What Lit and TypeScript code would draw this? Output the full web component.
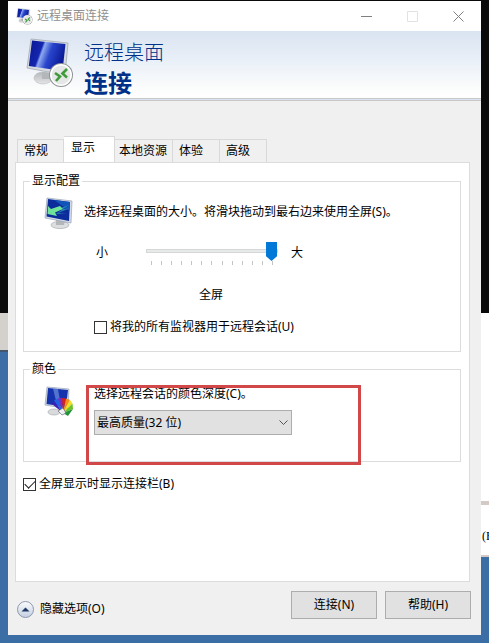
import { LitElement, html, css } from "lit";
import { customElement, state } from "lit/decorators.js";

const remoteIcon = (badge: number) => html`
  <svg viewBox="0 0 48 50" width="100%" height="100%" aria-hidden="true">
    <defs>
      <linearGradient id="glass" x1="0" y1="0" x2="1" y2="0.3">
        <stop offset="0" stop-color="#0a1790" />
        <stop offset="0.38" stop-color="#1426b0" />
        <stop offset="0.44" stop-color="#8ea9f0" />
        <stop offset="0.64" stop-color="#2a46cc" />
        <stop offset="1" stop-color="#0c1c9a" />
      </linearGradient>
      <linearGradient id="stand" x1="0" y1="0" x2="0" y2="1">
        <stop offset="0" stop-color="#b4b7ba" />
        <stop offset="1" stop-color="#e4e5e6" />
      </linearGradient>
    </defs>
    <ellipse cx="17" cy="40" rx="9" ry="6" fill="url(#stand)" stroke="#b8babc" stroke-width="0.6" />
    <path d="M16 34 L26 35 L26 41 L16 41Z" fill="#b4b7ba" />
    <path d="M5 1 L42 5 L39 37 L1 30Z" fill="#d5dae0" stroke="#a5abb3" stroke-width="0.8" />
    <path d="M6 2.5 L39.5 6 L36.5 33 L2.8 28Z" fill="url(#glass)" />
    <g transform="translate(35 37) scale(${badge})">
      <circle r="12" fill="#8f9394" />
      <circle r="11" fill="#fff" />
      <circle r="9.4" fill="#e4e7e5" />
      <path d="M-6 -2 L-1 1.5 L-5 6" fill="none" stroke="#3f9a3a" stroke-width="2.6" />
      <path d="M6 -6 L1.5 -1.5 L6 2.5" fill="none" stroke="#3f9a3a" stroke-width="2.6" />
    </g>
  </svg>
`;

const arrowScreen = html`
  <svg viewBox="0 0 30 33" width="30" height="33" aria-hidden="true">
    <ellipse cx="16" cy="28" rx="9" ry="3.6" fill="#dcdedf" stroke="#a9acaf" stroke-width="0.7" />
    <path d="M12 22 L21 23 L20 28 L12 28Z" fill="#b4b7ba" />
    <path d="M3 1 L28 4 L27 26 L1 21Z" fill="#d3dae6" stroke="#97a3b8" stroke-width="0.7" />
    <path d="M4 2 L26 5 L25 24 L2.5 19.5Z" fill="#0d2c9c" />
    <path d="M10 3 L26 5 L25.5 14Z" fill="#1254b8" />
    <path d="M25 8 L14 12 L25 11.5 L14 16 L23 16 L12 17Z" fill="#2284b4" />
    <path d="M4 9 L7 12 L16 9 L19 12 L11 15.5 L13 19 L3.5 17Z" fill="#6fe39a" />
  </svg>
`;

const swatchScreen = html`
  <svg viewBox="0 0 30 31" width="30" height="31" aria-hidden="true">
    <ellipse cx="10" cy="26" rx="6" ry="3" fill="#d8dadc" stroke="#aaadb0" stroke-width="0.7" />
    <path d="M3 1 L25 3 L24 23 L1 19Z" fill="#d3dae6" stroke="#97a3b8" stroke-width="0.7" />
    <path d="M4 2 L24 4 L22 21 L2.5 18Z" fill="#1533ac" />
    <path d="M9 2.4 L14 3 L17 20 L13 19Z" fill="#7d9fea" opacity="0.6" />
    <path d="M19 27 L8 18 L10 14.5Z" fill="#3b1fb8" />
    <path d="M19 27 L10 14.5 L14 12.5Z" fill="#1e62e0" />
    <path d="M19 27 L14 12.5 L18 12Z" fill="#7a2bc8" />
    <path d="M19 27 L18 12 L22 12.5Z" fill="#d8201f" />
    <path d="M19 27 L22 12.5 L26 14Z" fill="#f5901a" />
    <path d="M19 27 L26 14 L28.5 17.5Z" fill="#f0e020" />
    <path d="M19 27 L28.5 17.5 L29 23Z" fill="#6cc22a" />
    <path d="M19 27 L29 23 L24 30Z" fill="#22943c" />
    <path d="M14 25 L19 22 L22 27 L18 29Z" fill="#eef0f4" stroke="#55585e" stroke-width="0.6" />
  </svg>
`;

@customElement("app-root")
export class AppRoot extends LitElement {
  @state() private tab = "显示";

  private tabs = ["常规", "显示", "本地资源", "体验", "高级"];

  static styles = css`
    :host {
      display: block;
      position: relative;
      min-height: 100vh;
      box-sizing: border-box;
      padding: 1px 8px 8px;
      background: #3a6ea5;
      color: #000;
      font: 12px/16px "Noto Sans", "Noto Sans CJK SC", sans-serif;
    }
    * {
      box-sizing: border-box;
    }
    button,
    select,
    input {
      font: inherit;
      color: inherit;
      margin: 0;
    }
    .desktop {
      position: absolute;
      inset: 0;
      display: grid;
      grid-template-columns: 1fr 8px;
      overflow: hidden;
    }
    .left {
      display: grid;
      grid-template-rows: 313px 39px 1fr;
    }
    .right {
      display: grid;
      grid-template-rows: 313px 188px 4px 50px 2px 1fr;
    }
    .dark {
      background: #0a0a0a;
    }
    .beige {
      background: #d4d0cc;
      border-bottom: 2px solid #44566c;
    }
    .sand {
      background: #d4c9c6;
    }
    .white {
      background: #fff;
    }
    .behind {
      display: flex;
      align-items: center;
      padding: 12px 0 0 1px;
      overflow: hidden;
      white-space: nowrap;
      font-family: "Liberation Serif", serif;
    }
    .window {
      position: relative;
      display: flex;
      flex-direction: column;
      min-height: calc(100vh - 9px);
      background: #f0f0f0;
    }
    .titlebar {
      display: flex;
      align-items: center;
      height: 30px;
      padding-left: 8px;
      background: #fff;
      color: #8f8f8f;
    }
    .small-icon {
      width: 16px;
      height: 16px;
      margin-right: 5px;
    }
    .small-icon svg {
      display: block;
      overflow: visible;
    }
    .caption {
      flex: 1;
    }
    .winbtn {
      display: grid;
      place-items: center;
      width: 46px;
      height: 30px;
      padding: 0;
      border: 0;
      background: none;
      color: #808080;
    }
    .winbtn.off {
      color: #e2e2e2;
    }
    .banner {
      display: flex;
      gap: 10px;
      height: 70px;
      padding: 7px 18px 0;
      background: linear-gradient(#dae3f1, #eaf0f8 45%, #fbfcfc 85%, #fff);
      border-bottom: 3px double #c8c8c8;
      color: #12337a;
    }
    .big-icon {
      width: 48px;
      height: 50px;
    }
    .banner h1 {
      margin: 0;
      font-size: 24px;
      line-height: 30px;
      font-weight: 700;
      color: #003087;
    }
    .banner .light {
      display: block;
      font-size: 20px;
      line-height: 30px;
      font-weight: 300;
    }
    .tabs {
      display: flex;
      align-items: flex-end;
      margin: 35px 9px 0;
      height: 26px;
    }
    .tab {
      height: 23px;
      padding: 0 6px;
      border: 1px solid #d9d9d9;
      border-left-width: 0;
      border-bottom: 0;
      background: #f0f0f0;
      text-align: left;
      white-space: nowrap;
    }
    .tab:first-child {
      border-left-width: 1px;
    }
    .tab.on {
      height: 26px;
      padding: 0 7px 3px;
      background: #fff;
    }
    .wide {
      width: 47px;
    }
    .tab.wide.on {
      width: 51px;
    }
    .fit {
      width: 58px;
      padding: 0 4px;
    }
    .page {
      flex: 1;
      margin: 0 11px 0 7px;
      padding: 10px 8px 10px 7px;
      background: #fff;
      border: 1px solid #dcdcdc;
    }
    fieldset {
      position: relative;
      min-width: 0;
      margin: 0 0 9px;
      padding: 0 9px 0 20px;
      border: 1px solid #dcdcdc;
    }
    legend {
      margin-left: -14px;
      padding: 0 2px;
    }
    .display {
      height: 179px;
    }
    .colors {
      height: 101px;
      margin-bottom: 14px;
    }
    .row {
      display: flex;
      gap: 10px;
    }
    .row > svg {
      flex: none;
    }
    .display .row {
      padding-top: 8px;
    }
    .display .row p {
      margin: 7px 0 0;
    }
    .colors .row {
      padding-top: 9px;
    }
    .scale {
      display: flex;
      margin: 11px 0 0 52px;
    }
    .scale > span {
      padding-top: 4px;
    }
    .slider {
      display: flex;
      flex-direction: column;
      width: 132px;
      margin: 0 13px 0 38px;
    }
    .slider input {
      appearance: none;
      width: 132px;
      height: 20px;
      background: none;
    }
    .slider input::-webkit-slider-runnable-track {
      height: 4px;
      background: #e7eaea;
      border: 1px solid #d6d6d6;
    }
    .slider input::-webkit-slider-thumb {
      appearance: none;
      width: 11px;
      height: 19px;
      margin-top: -8px;
      background: #0078d7;
      clip-path: polygon(0 0, 100% 0, 100% 75%, 50% 100%, 0 75%);
    }
    .ticks {
      display: flex;
      justify-content: space-between;
      width: 122px;
      margin-left: 5px;
    }
    .ticks i {
      width: 1px;
      height: 4px;
      background: #c4c4c4;
    }
    .full {
      display: block;
      margin: 22px 0 16px 155px;
    }
    .check {
      display: flex;
      align-items: center;
      gap: 3px;
    }
    .check input {
      appearance: none;
      display: grid;
      width: 13px;
      height: 13px;
      border: 1px solid #333;
      background: #fff;
    }
    .check input:checked::before {
      content: "";
      width: 9px;
      height: 5px;
      margin: 1px;
      border: solid #222;
      border-width: 0 0 1px 1px;
      transform: rotate(-45deg);
    }
    .indent {
      margin-left: 50px;
    }
    .depth {
      display: flex;
      flex-direction: column;
      gap: 8px;
      width: 198px;
      margin-left: 10px;
    }
    .pick {
      position: relative;
    }
    .pick select {
      appearance: none;
      display: block;
      width: 100%;
      height: 25px;
      padding: 0 2px;
      border: 1px solid #adadad;
      border-radius: 0;
      background: #e1e1e1;
    }
    .pick svg {
      position: absolute;
      right: 4px;
      top: 8px;
      pointer-events: none;
    }
    .mark {
      position: absolute;
      left: 62px;
      top: 8px;
      width: 275px;
      height: 80px;
      border: 3px solid #d24848;
      pointer-events: none;
    }
    .footer {
      display: flex;
      align-items: center;
      gap: 8px;
      padding: 9px 10px 16px 8px;
    }
    .toggle {
      display: flex;
      align-items: center;
      gap: 5px;
      margin: 8px auto 0 0;
      padding: 0;
      border: 0;
      background: none;
    }
    .push {
      width: 86px;
      height: 28px;
      padding: 0;
      border: 1px solid #adadad;
      background: #e1e1e1;
    }
  `;

  render() {
    return html`
      <div class="desktop" aria-hidden="true">
        <div class="left">
          <div class="dark"></div>
          <div class="beige"></div>
        </div>
        <div class="right">
          <div class="dark"></div>
          <div class="white"></div>
          <div class="sand"></div>
          <div class="white behind">(E</div>
          <div class="sand"></div>
        </div>
      </div>
      <main class="window">
        <header class="titlebar">
          <span class="small-icon">${remoteIcon(1.3)}</span>
          <span class="caption">远程桌面连接</span>
          <button class="winbtn" aria-label="最小化">
            <svg width="11" height="11"><path d="M0 5.5H11" stroke="currentColor" /></svg>
          </button>
          <button class="winbtn off" aria-label="最大化" disabled>
            <svg width="11" height="11">
              <path d="M.5 .5H10.5V10.5H.5Z" fill="none" stroke="currentColor" />
            </svg>
          </button>
          <button class="winbtn" aria-label="关闭">
            <svg width="11" height="11">
              <path d="M.5 .5L10.5 10.5M10.5 .5L.5 10.5" stroke="currentColor" />
            </svg>
          </button>
        </header>
        <div class="banner">
          <span class="big-icon">${remoteIcon(1)}</span>
          <h1><span class="light">远程桌面</span>连接</h1>
        </div>
        <div class="tabs" role="tablist">
          ${this.tabs.map(
            (name) => html`<button
              class="tab ${name.length > 2 ? "fit" : "wide"} ${name === this.tab ? "on" : ""}"
              role="tab"
              aria-selected=${name === this.tab}
              @click=${() => (this.tab = name)}
            >${name}</button>`
          )}
        </div>
        <section class="page" role="tabpanel">
          <fieldset class="display">
            <legend>显示配置</legend>
            <div class="row">
              ${arrowScreen}
              <p><label for="size">选择远程桌面的大小。将滑块拖动到最右边来使用全屏(S)。</label></p>
            </div>
            <div class="scale">
              <span>小</span>
              <div class="slider">
                <input id="size" type="range" min="0" max="12" value="12" />
                <div class="ticks">${Array.from({ length: 13 }, () => html`<i></i>`)}</div>
              </div>
              <span>大</span>
            </div>
            <output class="full" for="size">全屏</output>
            <label class="check indent">
              <input type="checkbox" />将我的所有监视器用于远程会话(U)
            </label>
          </fieldset>
          <fieldset class="colors">
            <legend>颜色</legend>
            <div class="row">
              ${swatchScreen}
              <div class="depth">
                <label for="depth">选择远程会话的颜色深度(C)。</label>
                <div class="pick">
                  <select id="depth">
                    <option>最高质量(32 位)</option>
                  </select>
                  <svg width="9" height="9" viewBox="0 0 9 9">
                    <path d="M.5 2.5L4.5 6.5L8.5 2.5" fill="none" stroke="#555" />
                  </svg>
                </div>
              </div>
            </div>
            <div class="mark"></div>
          </fieldset>
          <label class="check">
            <input type="checkbox" checked />全屏显示时显示连接栏(B)
          </label>
        </section>
        <footer class="footer">
          <button class="toggle">
            <svg width="19" height="19" viewBox="0 0 19 19" aria-hidden="true">
              <defs>
                <linearGradient id="knob" x1="0" y1="0" x2="0" y2="1">
                  <stop offset="0" stop-color="#fbfcfe" />
                  <stop offset="0.5" stop-color="#dfe5ef" />
                  <stop offset="1" stop-color="#c3cfe2" />
                </linearGradient>
              </defs>
              <circle cx="9.5" cy="9.5" r="8" fill="url(#knob)" stroke="#8d98ac" />
              <path d="M5.5 11.5L9.5 7.5L13.5 11.5Z" fill="#1f3864" />
            </svg>
            隐藏选项(O)
          </button>
          <button class="push">连接(N)</button>
          <button class="push">帮助(H)</button>
        </footer>
      </main>
    `;
  }
}
